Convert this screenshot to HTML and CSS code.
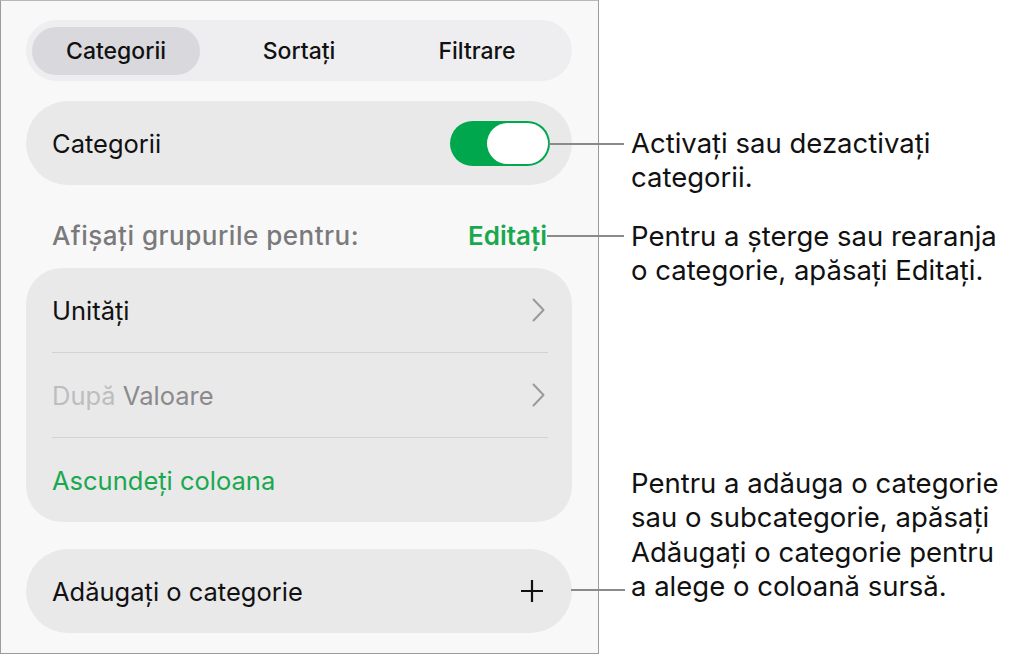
FILE: index.html
```html
<!DOCTYPE html>
<html lang="ro">
  <head>
    <meta charset="UTF-8" />
    <meta name="viewport" content="width=device-width, initial-scale=1.0" />
    <title>Categorii</title>
    <link rel="stylesheet" href="styles.css">
  </head>

  <body>
    <div class="page">
      <div class="panel">
        <div class="segments">
          <span class="segment selected">Categorii</span>
          <span class="segment">Sortați</span>
          <span class="segment">Filtrare</span>
        </div>

        <div class="card toggle-row">
          <span>Categorii</span>
          <span class="switch"><span class="knob"></span></span>
        </div>

        <div class="section-head">
          <span>Afișați grupurile pentru:</span>
          <span class="edit">Editați</span>
        </div>

        <div class="card list">
          <div class="row">
            <span>Unități</span>
            <svg class="chevron" width="13" height="24" viewBox="0 0 13 24">
              <path d="M1.5 1.5 L11.5 12 L1.5 22.5" fill="none" stroke="#9a9a9c" stroke-width="2" stroke-linecap="round" stroke-linejoin="round" />
            </svg>
          </div>
          <div class="sep"></div>
          <div class="row">
            <span><span class="faint">După</span> <span class="muted">Valoare</span></span>
            <svg class="chevron" width="13" height="24" viewBox="0 0 13 24">
              <path d="M1.5 1.5 L11.5 12 L1.5 22.5" fill="none" stroke="#9a9a9c" stroke-width="2" stroke-linecap="round" stroke-linejoin="round" />
            </svg>
          </div>
          <div class="sep"></div>
          <div class="row">
            <span class="green">Ascundeți coloana</span>
          </div>
        </div>

        <div class="card add-row">
          <span>Adăugați o categorie</span>
          <svg width="22" height="22" viewBox="0 0 22 22">
            <path d="M11 0 V22 M0 11 H22" stroke="#111" stroke-width="2.2" />
          </svg>
        </div>
      </div>

      <div class="notes">
        <p class="note note-toggle">Activați sau dezactivați<br />categorii.</p>
        <p class="note note-edit">Pentru a șterge sau rearanja<br />o categorie, apăsați Editați.</p>
        <p class="note note-add">Pentru a adăuga o categorie<br />sau o subcategorie, apăsați<br />Adăugați o categorie pentru<br />a alege o coloană sursă.</p>
      </div>
    </div>
  </body>
</html>
```

FILE: styles.css
```css
* {
  margin: 0;
  padding: 0;
  box-sizing: border-box;
}

body {
  font-family: Inter, "Liberation Sans", sans-serif;
  font-size: 25.5px;
  color: #111;
  background: #fff;
}

.page {
  display: flex;
  align-items: flex-start;
}

.panel {
  flex: 0 0 599px;
  width: 599px;
  height: 654px;
  background: #f8f8f8;
  border: 1px solid #9c9c9c;
  border-top-color: #b8b8b8;
  padding: 19px 26px 0 25px;
}

/* segmented control */
.segments {
  display: flex;
  align-items: center;
  height: 61px;
  padding: 0 6px;
  background: #eeeef0;
  border-radius: 31px;
  margin-bottom: 20px;
}

.segment {
  flex: 1;
  text-align: center;
  font-size: 23px;
  font-weight: 500;
  line-height: 48px;
  border-radius: 24px;
}

.segment.selected {
  flex: 0 0 168px;
  background: #d9d9dd;
  margin-right: 10px;
}

.card {
  background: #e9e9ea;
  border-radius: 42px;
}

.toggle-row,
.add-row {
  height: 84px;
  display: flex;
  align-items: center;
  justify-content: space-between;
  padding: 0 22px 0 26px;
}

.add-row {
  padding-right: 29px;
}

.switch {
  width: 100px;
  height: 45px;
  border-radius: 23px;
  background: #00a74d;
  padding: 2px 2px 2px 37px;
  display: flex;
}

.knob {
  flex: 1;
  background: #fff;
  border-radius: 21px;
}

.section-head {
  display: flex;
  justify-content: space-between;
  align-items: center;
  height: 83px;
  padding: 18px 25px 0 26px;
  color: #7a7a7c;
  font-size: 26px;
  font-weight: 500;
}

.section-head span:first-child {
  letter-spacing: 0.5px;
}

.edit {
  color: #1aa84f;
  font-weight: 600;
}

.list {
  border-radius: 36px;
  margin-bottom: 27px;
}

.row {
  height: 84px;
  display: flex;
  align-items: center;
  justify-content: space-between;
  padding: 0 27px 0 26px;
}

.sep {
  height: 1px;
  background: #d3d3d5;
  margin: 0 24px 0 26px;
}

.faint {
  color: #bdbdbf;
}

.muted {
  color: #8a8a8c;
}

.green {
  color: #1aa84f;
}

/* callouts beside the panel */
.notes {
  padding-left: 32px;
  padding-top: 126px;
  white-space: nowrap;
}

.note {
  position: relative;
  font-size: 27.5px;
  line-height: 34.3px;
  color: #111;
}

.note::before {
  content: "";
  position: absolute;
  top: 17px;
  height: 2px;
  background: #8a8a8a;
}

.note-toggle::before {
  left: -82px;
  width: 75px;
}

.note-edit {
  margin-top: 24px;
}

.note-edit::before {
  top: 16px;
  left: -84px;
  width: 77px;
}

.note-add {
  margin-top: 179px;
}

.note-add::before {
  top: 123px;
  left: -60px;
  width: 54px;
}
```
